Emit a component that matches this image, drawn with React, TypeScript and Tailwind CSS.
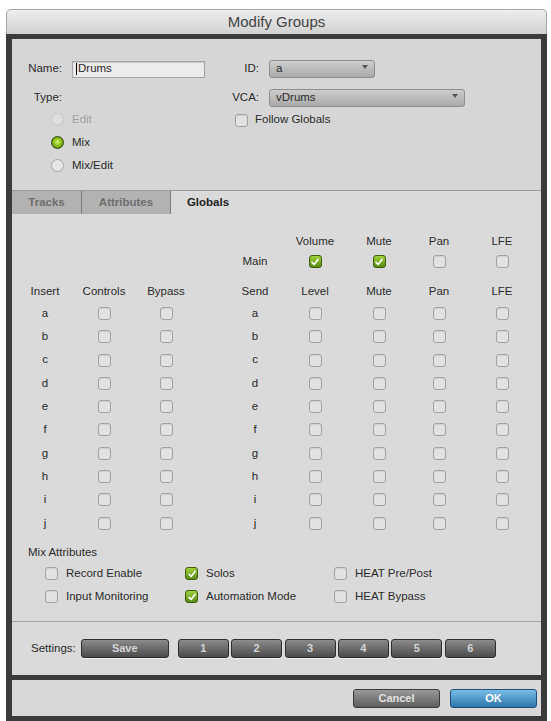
import React from 'react';

const cols =
  'grid grid-cols-[60px_58px_66px_26px_60px_60px_68px_52px_74px] items-center justify-items-center';

const Box = ({ on = false }: { on?: boolean }) =>
  on ? (
    <span className="flex h-[13px] w-[13px] items-center justify-center rounded-[3px] border border-[#3f5e0c] bg-linear-to-b from-[#a2d23e] to-[#5a8a10]">
      <svg viewBox="0 0 12 12" className="h-[10px] w-[10px]">
        <path d="M2.4 6.4 L5 9 L9.6 3" fill="none" stroke="#fff" strokeWidth="2" strokeLinecap="round" strokeLinejoin="round" />
      </svg>
    </span>
  ) : (
    <span className="block h-[13px] w-[13px] rounded-[3px] border border-[#a2a2a2] bg-[#e2e2e2] shadow-[inset_0_1px_1px_rgba(0,0,0,0.08)]" />
  );

const Dropdown = ({ value, width }: { value: string; width: string }) => (
  <div className={`relative ml-[10px] flex h-[18px] items-center rounded-[3px] border border-[#8e8e8e] bg-linear-to-b from-[#cdcdcd] to-[#a9a9a9] pl-[6px] ${width}`}>
    {value}
    <svg viewBox="0 0 6 4" className="absolute right-[6px] top-[4px] h-[4px] w-[6px]">
      <path d="M0 0 L6 0 L3 4 Z" fill="#555" />
    </svg>
  </div>
);

const Radio = ({ kind }: { kind: 'off' | 'on' | 'disabled' }) => {
  if (kind === 'on')
    return (
      <span className="block h-[13px] w-[13px] rounded-full border border-[#2f4a05] bg-[radial-gradient(circle_at_50%_45%,#d4f76a_0%,#8cc21e_45%,#3f6a06_100%)]" />
    );
  if (kind === 'disabled')
    return <span className="block h-[13px] w-[13px] rounded-full border border-[#c6c6c6] bg-[#dedede]" />;
  return <span className="block h-[13px] w-[13px] rounded-full border border-[#a8a8a8] bg-[#e6e6e6]" />;
};

const Btn = ({ label, className = '' }: { label: string; className?: string }) => (
  <div
    className={`flex h-[19px] items-center justify-center rounded-[3px] border border-[#2e2e2e] bg-linear-to-b from-[#8c8c8c] to-[#4c4c4c] text-[11px] font-bold text-[#d4d4d4] shadow-[0_1px_0_rgba(255,255,255,0.5)] ${className}`}
  >
    {label}
  </div>
);

export default function App() {
  const letters = ['a', 'b', 'c', 'd', 'e', 'f', 'g', 'h', 'i', 'j'];

  return (
    <div className="min-h-[721px] bg-white pt-[9px] font-['Liberation_Sans',Arial,sans-serif] text-[11.5px] text-[#2a2a2a]">
      <div className="ml-[6px] w-[541px]">
        {/* title bar */}
        <div className="flex h-[25px] items-center justify-center rounded-t-[5px] border border-b-0 border-[#a6a6a6] bg-linear-to-b from-[#eeeeee] to-[#d0d0d0] text-[15px] text-[#444]">
          Modify Groups
        </div>

        <div className="border-x-[6px] border-y-[5px] border-[#3b3b3b] bg-[#dadada]">
          {/* name / type / id / vca */}
          <div className="flex h-[151px] bg-[#d6d6d6] pt-[21px]">
            <div className="w-[212px]">
              <div className="flex h-[18px] items-center">
                <span className="w-[50px] text-right">Name:</span>
                <div className="ml-[10px] flex h-[17px] w-[133px] items-center border border-[#a4a4a4] bg-[#ececec] pl-[3px] shadow-[inset_0_1px_1px_rgba(0,0,0,0.15)]">
                  <span className="mr-px h-[12px] w-px bg-black" />
                  Drums
                </div>
              </div>
              <div className="mt-[11px] flex h-[18px] items-center">
                <span className="w-[50px] text-right">Type:</span>
              </div>
              <div className="mt-[1px]">
                <div className="flex h-[23px] items-center gap-[8px] pl-[39px] text-[#a0a0a0]">
                  <Radio kind="disabled" />
                  Edit
                </div>
                <div className="flex h-[23px] items-center gap-[8px] pl-[39px]">
                  <Radio kind="on" />
                  Mix
                </div>
                <div className="flex h-[23px] items-center gap-[8px] pl-[39px]">
                  <Radio kind="off" />
                  Mix/Edit
                </div>
              </div>
            </div>

            <div className="flex-1">
              <div className="flex h-[18px] items-center">
                <span className="w-[35px] text-right">ID:</span>
                <Dropdown value="a" width="w-[106px]" />
              </div>
              <div className="mt-[10.5px] flex h-[18px] items-center">
                <span className="w-[35px] text-right">VCA:</span>
                <Dropdown value="vDrums" width="w-[196px]" />
              </div>
              <div className="mt-[2px] flex h-[23px] items-center gap-[7px] pl-[11px]">
                <Box />
                Follow Globals
              </div>
            </div>
          </div>

          {/* tabs */}
          <div className="flex h-[24px] border-t border-[#9b9b9b] font-bold">
            <div className="flex w-[70px] items-center justify-center border-r border-[#7d7d7d] bg-[#b2b2b2] text-[#6e6e6e]">
              Tracks
            </div>
            <div className="flex w-[89px] items-center justify-center border-r border-[#7d7d7d] bg-[#b2b2b2] text-[#6e6e6e]">
              Attributes
            </div>
            <div className="flex w-[74px] items-center justify-center text-[#222]">Globals</div>
          </div>

          {/* globals */}
          <div className="h-[408px] border-b border-[#a5a5a5] pl-[3px] pt-[19px]">
            <div className={`${cols} h-[16px]`}>
              <span />
              <span />
              <span />
              <span />
              <span />
              <span>Volume</span>
              <span>Mute</span>
              <span>Pan</span>
              <span>LFE</span>
            </div>
            <div className={`${cols} mt-[4px] h-[16px]`}>
              <span />
              <span />
              <span />
              <span />
              <span>Main</span>
              <Box on />
              <Box on />
              <Box />
              <Box />
            </div>
            <div className={`${cols} mt-[14px] h-[16px]`}>
              <span>Insert</span>
              <span>Controls</span>
              <span>Bypass</span>
              <span />
              <span>Send</span>
              <span>Level</span>
              <span>Mute</span>
              <span>Pan</span>
              <span>LFE</span>
            </div>
            <div className="mt-[2.85px]">
              {letters.map((l) => (
                <div key={l} className={`${cols} h-[23.3px]`}>
                  <span>{l}</span>
                  <Box />
                  <Box />
                  <span />
                  <span>{l}</span>
                  <Box />
                  <Box />
                  <Box />
                  <Box />
                </div>
              ))}
            </div>

            <div className="mt-[11px] flex h-[14px] items-center pl-[13px]">Mix Attributes</div>
            <div className="mt-[2.5px] grid grid-cols-[140px_149px_1fr] pl-[30px]">
              {[
                ['Record Enable', false],
                ['Solos', true],
                ['HEAT Pre/Post', false],
                ['Input Monitoring', false],
                ['Automation Mode', true],
                ['HEAT Bypass', false],
              ].map(([label, on]) => (
                <div key={label as string} className="flex h-[23px] items-center gap-[8px]">
                  <Box on={on as boolean} />
                  {label as string}
                </div>
              ))}
            </div>
          </div>

          {/* settings */}
          <div className="flex h-[53px] items-center pl-[19px]">
            <span>Settings:</span>
            <Btn label="Save" className="ml-[5px] w-[88px]" />
            <div className="ml-[9px] flex gap-[2.4px]">
              {['1', '2', '3', '4', '5', '6'].map((n) => (
                <Btn key={n} label={n} className="w-[51px]" />
              ))}
            </div>
          </div>
        </div>

        {/* footer */}
        <div className="flex h-[41px] items-center justify-end gap-[10px] border-x-[6px] border-b-[5px] border-[#3b3b3b] bg-[#d8d8d8] pr-[4px]">
          <div className="flex h-[19px] w-[87px] items-center justify-center rounded-[3px] border border-[#3a3a3a] bg-linear-to-b from-[#9a9a9a] to-[#5e5e5e] text-[11px] font-bold text-[#e2e2e2]">
            Cancel
          </div>
          <div className="flex h-[19px] w-[87px] items-center justify-center rounded-[3px] border border-[#1f4f78] bg-linear-to-b from-[#78bde6] to-[#2c77ad] text-[11px] font-bold text-white">
            OK
          </div>
        </div>
      </div>
    </div>
  );
}
